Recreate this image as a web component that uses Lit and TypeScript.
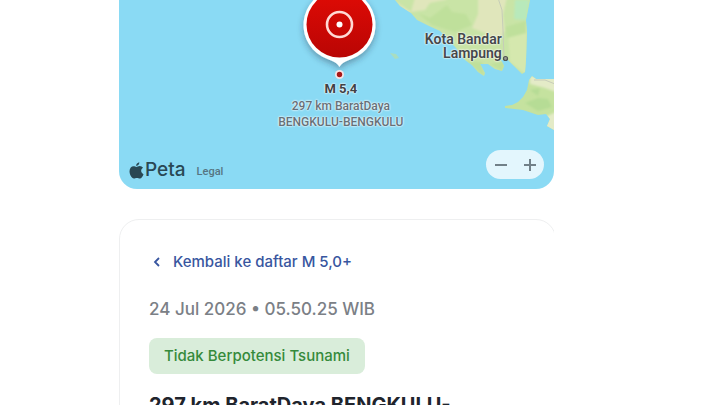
import { LitElement, html, css, svg } from "lit";
import { customElement } from "lit/decorators.js";

@customElement("quake-map")
class QuakeMap extends LitElement {
  static styles = css`
    :host {
      display: block;
      position: relative;
      overflow: hidden;
      border-radius: 0 0 18px 18px;
      background: #8adaf4;
      font-family: Roboto, "Liberation Sans", sans-serif;
      color: #45494d;
    }
    .terrain {
      display: block;
      width: 100%;
      height: auto;
    }
    .quake {
      position: absolute;
      left: 51%;
      top: 43%;
      transform: translateX(-50%);
      text-align: center;
      font-size: 12px;
      line-height: 16px;
      font-weight: 500;
      color: #667078;
      white-space: nowrap;
      text-shadow: 0 0 2px #fff, 0 0 2px #fff;
    }
    .magnitude {
      margin-bottom: 1px;
      font-size: 13px;
      font-weight: 700;
      color: #3f4245;
    }
    .city {
      position: absolute;
      right: 12%;
      top: 17%;
      text-align: right;
      font-size: 14px;
      line-height: 14px;
      font-weight: 600;
      color: #45484b;
      text-shadow: 0 0 2px #fff, 0 0 2px #fff;
    }
    .attribution {
      position: absolute;
      left: 10px;
      bottom: 7px;
      display: flex;
      align-items: center;
      color: #294854;
    }
    .apple {
      width: 15px;
      height: 17px;
      margin-right: 1px;
    }
    .brand {
      font-family: Inter, sans-serif;
      font-size: 19px;
      line-height: 24px;
      font-weight: 500;
    }
    .legal {
      margin: 4px 0 0 11px;
      font-size: 11px;
      line-height: 16px;
      font-weight: 500;
      color: #567582;
      text-decoration: none;
    }
    .zoom {
      position: absolute;
      right: 10px;
      bottom: 10px;
      display: flex;
      border-radius: 15px;
      background: #e3f6fd;
    }
    .zoom button {
      display: grid;
      place-items: center;
      width: 29px;
      height: 29px;
      padding: 0;
      border: 0;
      background: none;
      color: #718088;
    }
    .zoom svg {
      width: 14px;
      height: 14px;
    }
  `;

  private terrain() {
    return svg`
      <defs>
        <linearGradient id="red" x1="0" y1="0" x2="0" y2="1">
          <stop offset="0" stop-color="#e00b05" />
          <stop offset="1" stop-color="#b90504" />
        </linearGradient>
        <filter id="shade" x="-30%" y="-30%" width="160%" height="160%">
          <feDropShadow dx="0" dy="3" stdDeviation="3" flood-color="#234" flood-opacity=".4" />
        </filter>
        <filter id="soft"><feGaussianBlur stdDeviation="1" /></filter>
        <clipPath id="sumatra">
          <path d="M395 0 400 6 411 13 417 20 429 26 440 31 447 38 456 48 465 60 472 65 478 72 484 76 485 73 480 64 488 64 495 69 502 71 504 66 501 60 508 60 514 66 522 74 525 72 526 60 527 33 526 20 530 0Z" />
        </clipPath>
        <clipPath id="java">
          <path d="M532 76 536 79 554 79 554 130 547 126 550 119 546 114 538 115 523 110 505 108 505 106 512 105 518 102 523 97 527 90 529 80Z" />
        </clipPath>
      </defs>
      <g clip-path="url(#sumatra)">
        <path fill="#c9e4a6" d="M380-5H540V90H380Z" />
        <g filter="url(#soft)">
          <path fill="#e0e6bb" d="M390-3H415L411 12 425 10 430 3 445 0 453-5H400L394 0 408 14 411 12ZM478-3H507L503 15 505 30 500 40 485 33 472 28 478 14Z" />
          <path fill="#d5e8ae" d="M508 30 527 24 527 75 510 62Z" />
          <path fill="#bfe09b" d="M418 13 430 18 447 5 452 12 466 14 472 25 455 32 432 25ZM505 27 526 21 526 33 507 38ZM466 61 484 76 482 62ZM490 64 502 71 506 61Z" />
          <path fill="#b8e9bb" d="M515 0H529L526 20 514 19Z" />
        </g>
        <path fill="none" stroke="#c6cdb8" d="M498-2 502 10 503 30 504 58" />
      </g>
      <g clip-path="url(#java)">
        <path fill="#c5e29f" d="M500 70H560V135H500Z" />
        <g filter="url(#soft)">
          <path fill="#e4ebc7" d="M530 76 556 78V92L545 88 530 84ZM545 117 556 112V133H545Z" />
          <path fill="#b6dc95" d="M525 103 538 98 548 99 552 107 538 111ZM530 90 540 88 538 96Z" />
        </g>
        <path fill="none" stroke="#c7ccb9" d="M534 80 545 80 555 84" />
      </g>
      <path fill="#a9ddc0" d="M390 53 396 54 399 58 395 59Z" />
      <path fill="#fff" filter="url(#shade)" d="M339.500-11A36 36 0 0 0 322 56.500C331 61 336 61 339.500 67 343 61 348 61 357 56.500A36 36 0 0 0 339.500-11Z" />
      <circle cx="339.500" cy="24.500" r="33" fill="url(#red)" />
      <circle cx="339.500" cy="24.500" r="12.500" fill="none" stroke="#ffd9d5" stroke-width="2.600" />
      <circle cx="339.500" cy="24.500" r="3" fill="#fff" />
      <circle cx="339.500" cy="74.500" r="4.500" fill="#f6e4e5" />
      <circle cx="339.500" cy="74.500" r="2.700" fill="#a71818" />
      <circle cx="505.500" cy="58.500" r="2" fill="#999c94" stroke="#4e5352" stroke-width="1.200" />
    `;
  }

  render() {
    return html`
      <svg class="terrain" viewBox="119 0 435 189" aria-hidden="true">${this.terrain()}</svg>
      <div class="city">Kota Bandar<br />Lampung</div>
      <div class="quake">
        <div class="magnitude">M 5,4</div>
        <div>297 km BaratDaya</div>
        <div>BENGKULU-BENGKULU</div>
      </div>
      <div class="attribution">
        <svg class="apple" viewBox="0 0 15 17" fill="currentColor" aria-hidden="true">
          <path d="M10.300.3C10.500 2 9 4 7.200 3.900 7 2.200 8.600.6 10.300.3ZM7.400 4.900C8.200 4.900 9 4 10.700 4 12 4 13.300 4.700 14 5.800 11.300 7.300 11.700 11 14.500 12.200 13.900 14 12.500 16.500 10.900 16.500 9.800 16.500 9.200 15.900 7.900 15.900 6.600 15.900 5.900 16.500 4.900 16.500 2.700 16.500.5 12.600.5 9.300.5 6 2.500 4.200 4.500 4.200 5.800 4.200 6.700 4.900 7.400 4.900Z" />
        </svg>
        <span class="brand">Peta</span>
        <a class="legal" href="#legal">Legal</a>
      </div>
      <div class="zoom">
        <button aria-label="Perkecil">
          <svg viewBox="0 0 14 14" stroke="currentColor" stroke-width="2"><path d="M1 7H13" /></svg>
        </button>
        <button aria-label="Perbesar">
          <svg viewBox="0 0 14 14" stroke="currentColor" stroke-width="2"><path d="M1 7H13M7 1V13" /></svg>
        </button>
      </div>
    `;
  }
}

@customElement("app-root")
class AppRoot extends LitElement {
  static styles = css`
    :host {
      display: block;
      height: 100vh;
      overflow: hidden;
      background: #fff;
      font-family: Inter, "Liberation Sans", sans-serif;
    }
    .page {
      display: grid;
      grid-template-columns: 119fr 435fr 166fr;
    }
    .column {
      grid-column: 2;
      display: flex;
      flex-direction: column;
      gap: 30px;
      min-width: 0;
      overflow: hidden;
    }
    .card {
      display: flex;
      flex-direction: column;
      align-items: flex-start;
      margin-right: -2px;
      padding: 32px 29px;
      border: 1px solid #eeeff0;
      border-radius: 20px;
    }
    .back {
      display: flex;
      align-items: center;
      gap: 8px;
      font-size: 15px;
      line-height: 20px;
      font-weight: 500;
      color: #3856a0;
      text-decoration: none;
    }
    .back svg {
      width: 16px;
      height: 16px;
    }
    .time {
      margin-top: 24px;
      font-size: 17px;
      line-height: 26px;
      font-weight: 500;
      color: #7b8086;
    }
    .status {
      margin-top: 16px;
      padding: 8px 15px;
      border-radius: 8px;
      background: #d9edda;
      font-size: 15px;
      line-height: 20px;
      font-weight: 500;
      color: #358a3b;
    }
    .title {
      margin: 17px 0 0;
      max-width: 320px;
      font-size: 20px;
      line-height: 28px;
      font-weight: 700;
      color: #20242c;
    }
  `;

  render() {
    return html`
      <main class="page">
        <div class="column">
          <quake-map></quake-map>
          <article class="card">
            <a class="back" href="#daftar">
              <svg viewBox="0 0 16 16" fill="none" stroke="currentColor" stroke-width="1.800" aria-hidden="true">
                <path d="M10 4 6 8 10 12" />
              </svg>
              Kembali ke daftar M 5,0+
            </a>
            <time class="time" datetime="2026-07-24T05:50:25+07:00">24 Jul 2026 • 05.50.25 WIB</time>
            <div class="status">Tidak Berpotensi Tsunami</div>
            <h1 class="title">297 km BaratDaya BENGKULU-BENGKULU</h1>
          </article>
        </div>
      </main>
    `;
  }
}
